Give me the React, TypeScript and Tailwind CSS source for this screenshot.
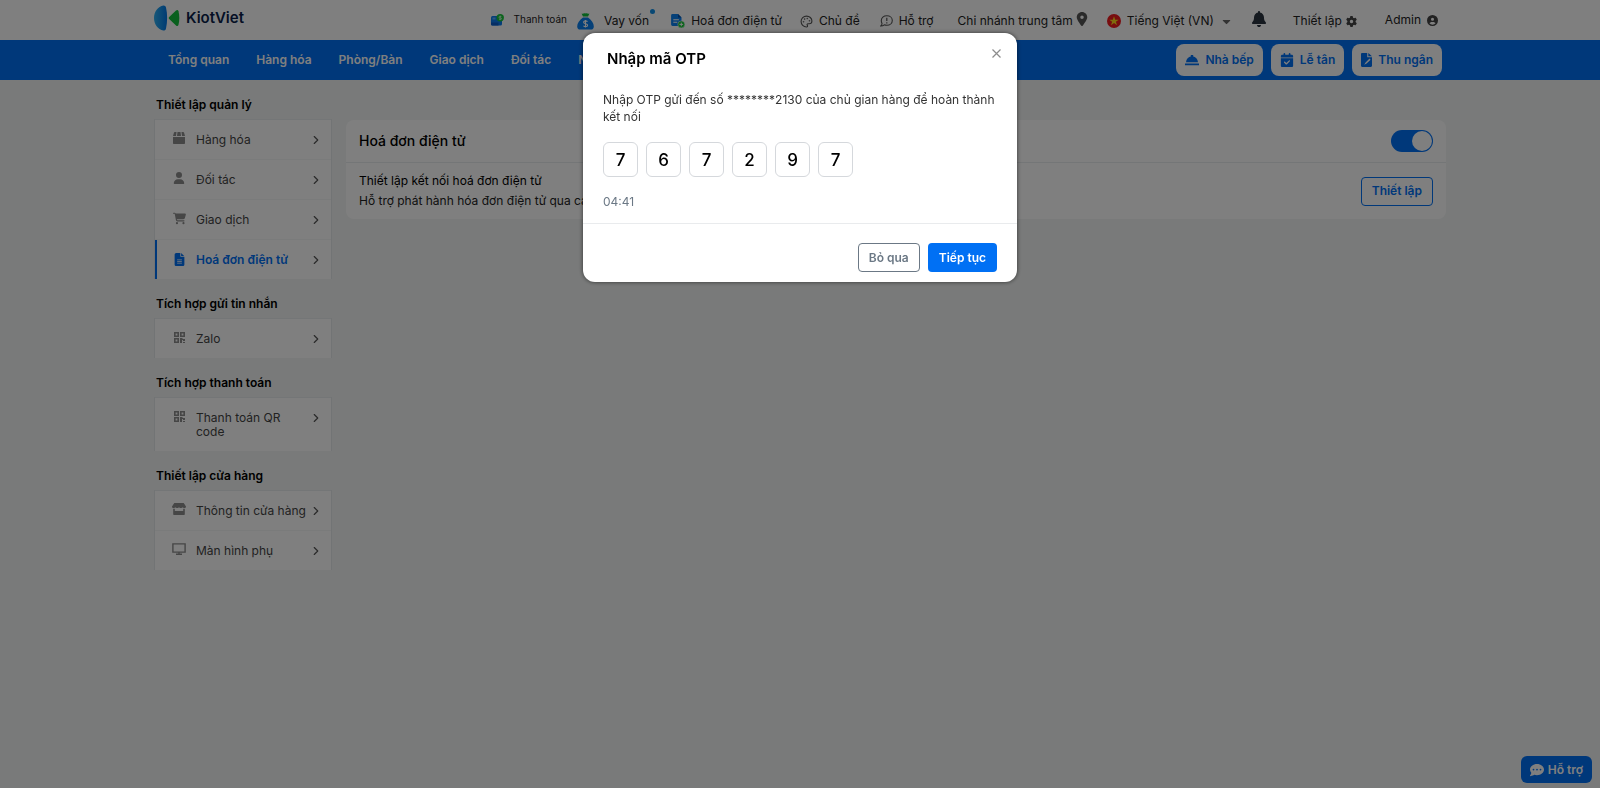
import { useState, type ReactNode } from "react";
import {
  FaBell,
  FaCalendarCheck,
  FaCartShopping,
  FaCircleUser,
  FaCommentDots,
  FaFileLines,
  FaGear,
  FaLocationDot,
  FaUser,
} from "react-icons/fa6";
import { FaCaretDown } from "react-icons/fa";
import { ChevronRight, Palette } from "lucide-react";

function Logo() {
  return (
    <svg width="26" height="26" viewBox="0 0 26 26" aria-hidden="true">
      <defs>
        <linearGradient id="logoBlue" x1="0" y1="0" x2="1" y2="0">
          <stop offset="0" stopColor="#2fb0f0" />
          <stop offset="1" stopColor="#0078e8" />
        </linearGradient>
      </defs>
      <path d="M9.400.4c1.600 0 2.300.8 2.600 2.200 1.500 6.500 1.500 14.300 0 20.800-.3 1.400-1 2.200-2.600 2.200C4 24.500 0 19.500 0 13S4 1.500 9.400.4Z" fill="url(#logoBlue)" />
      <path d="M15.200 12 22 5.600c1.100-1 2.100-.7 2.500.6 1.100 4.400 1.100 9.200 0 13.600-.4 1.300-1.400 1.600-2.500.6L15.200 14c-.7-.7-.7-1.300 0-2Z" fill="#12c03c" />
    </svg>
  );
}

function PaymentIcon() {
  return (
    <svg width="13" height="12" viewBox="0 0 13 12" aria-hidden="true">
      <rect x="0" y="2" width="11" height="9.500" rx="1.500" fill="#0a7cf0" />
      <path d="M0 8.500h7.500v3H1.500A1.500 1.500 0 0 1 0 10Z" fill="#0a5cc8" />
      <rect x="1.500" y="3.500" width="3" height="2" fill="#5cb0ff" />
      <circle cx="9.200" cy="3.800" r="3.700" fill="#19c83a" />
      <path d="M9.200 1.500v4.600M10.400 2.500H8.600a.7.7 0 0 0 0 1.400h1.200a.7.7 0 0 1 0 1.400H8" stroke="#d8ffe0" strokeWidth=".7" fill="none" />
    </svg>
  );
}

function LoanIcon() {
  return (
    <svg width="17" height="17" viewBox="0 0 17 17" aria-hidden="true">
      <path d="M4.500.5c1.500.6 2.400-.5 4 0 1.600-.5 2.500.6 4 0L11 3.600H6Z" fill="#12c03c" />
      <path d="M6 4.600h5c3.500 2.400 5.800 5.800 5.800 8.900 0 2-1 3.100-3 3.100H3.200c-2 0-3-1.100-3-3.100C.2 10.400 2.500 7 6 4.600Z" fill="#0a80f0" />
      <path d="M8.500 7v7.600M10.500 8.700c-.5-.6-1.200-.8-2-.8-1 0-1.900.5-1.900 1.400 0 2.100 4 .9 4 3 0 .9-.9 1.400-2 1.400-.9 0-1.700-.3-2.100-1" stroke="#fff" strokeWidth="1.100" fill="none" />
    </svg>
  );
}

function InvoiceIcon() {
  return (
    <svg width="14" height="14" viewBox="0 0 14 14" aria-hidden="true">
      <path d="M1.500 0H7l3.500 3.500V12H1.500A1.400 1.400 0 0 1 .1 10.600V1.400A1.400 1.400 0 0 1 1.500 0Z" fill="#0a80f0" />
      <path d="M7 0v3.500h3.500Z" fill="#054fa8" />
      <path d="M2.300 5.700h5.600M2.300 8.300h4" stroke="#fff" strokeWidth="1.100" />
      <circle cx="10.300" cy="10.400" r="3.500" fill="#19c83a" stroke="#fff" strokeWidth=".5" />
      <path d="M10.300 8.600v3.600M8.500 10.400h3.600" stroke="#fff" strokeWidth="1" />
    </svg>
  );
}

function HelpIcon() {
  return (
    <svg width="13" height="12" viewBox="0 0 13 12" fill="none" stroke="#555" strokeWidth="1.100" aria-hidden="true">
      <path d="M6.800.8c3.200 0 5.500 2 5.500 4.700s-2.300 4.800-5.500 4.800c-.9 0-1.700-.2-2.500-.5-1 .9-2.100 1.200-3.500 1.200.8-.8 1.200-1.600 1.200-2.600C1.500 7.600 1.300 6.600 1.300 5.500 1.300 2.800 3.600.8 6.800.8Z" />
      <path d="M6.800 2.800v3.300M6.800 7.200v1.200" strokeWidth="1.200" />
    </svg>
  );
}

function FlagIcon() {
  return (
    <svg width="14" height="14" viewBox="0 0 14 14" aria-hidden="true">
      <circle cx="7" cy="7" r="7" fill="#f01a1e" />
      <path d="m7 2.300 1.200 3.400h3.500L8.900 7.800 10 11.200 7 9.100l-3 2.100 1.100-3.400-2.800-2.100h3.500Z" fill="#ffd91a" />
    </svg>
  );
}

function BellDishIcon() {
  return (
    <svg width="14" height="11" viewBox="0 0 14 11" fill="currentColor" aria-hidden="true">
      <path d="M5.800 0h2.400v1.300h-.5C10.700 1.700 12.700 4 13 7.300H1c.3-3.300 2.300-5.600 5.300-6h-.5ZM0 8.600h14v1.700H0Z" />
    </svg>
  );
}

function FileCheckIcon() {
  return (
    <svg width="11" height="14" viewBox="0 0 11 14" fill="currentColor" aria-hidden="true">
      <path fillRule="evenodd" d="M1.200 0h5v4.200H11v8.600c0 .7-.5 1.200-1.200 1.200H1.200C.5 14 0 13.500 0 12.800V1.200C0 .5.500 0 1.200 0Zm7.300 5.600-3.900 3.900-1.400 2.200 2.400-1.200 4-3.800Z" />
      <path d="M7.300 0 11 3.200H7.300Z" />
    </svg>
  );
}

function BoxIcon() {
  return (
    <svg width="12" height="12" viewBox="0 0 12 12" fill="currentColor" aria-hidden="true">
      <path d="M1.800 0h1.700L3 4H0l1-3.400C1.100.2 1.400 0 1.800 0ZM4.500 0h3l.5 4H4ZM8.500 0h1.700c.4 0 .7.2.8.6L12 4H9ZM0 5h12v6c0 .6-.4 1-1 1H1c-.6 0-1-.4-1-1Z" />
    </svg>
  );
}

function QrIcon() {
  return (
    <svg width="11" height="11" viewBox="0 0 11 11" aria-hidden="true">
      <path d="M.8.8h3.400v3.400H.8ZM6.800.8h3.400v3.400H6.800ZM.8 6.800h3.400v3.400H.8Z" fill="none" stroke="currentColor" strokeWidth="1.600" />
      <path d="M6 6h2.500v1H11v2H9V8H8v3H6ZM9 10h2v1H9Z" fill="currentColor" />
    </svg>
  );
}

function ShopIcon() {
  return (
    <svg width="14" height="12" viewBox="0 0 14 12" fill="currentColor" aria-hidden="true">
      <path d="M2.300 0h9.400L14 3.400C14 4.600 13.200 5 12.400 5c-.9 0-1.300-.5-1.800-.5S9.700 5 8.800 5 7.500 4.500 7 4.500 6.100 5 5.200 5s-1.300-.5-1.800-.5S2.500 5 1.600 5 0 4.600 0 3.400Z" />
      <path fillRule="evenodd" d="M1.200 5.700h1.600V8h8.400V5.700h1.600V11c0 .6-.4 1-1 1H2.200c-.6 0-1-.4-1-1Z" />
    </svg>
  );
}

function ScreenIcon() {
  return (
    <svg width="14" height="12" viewBox="0 0 14 12" fill="none" stroke="currentColor" strokeWidth="1.400" aria-hidden="true">
      <path d="M.9.9h12.200v8.200H.9ZM7 9v2M4 11.200h6" />
    </svg>
  );
}

type MenuItem = { label: string; icon: ReactNode; active?: boolean };

const groups: { title: string; items: MenuItem[] }[] = [
  {
    title: "Thiết lập quản lý",
    items: [
      { label: "Hàng hóa", icon: <BoxIcon /> },
      { label: "Đối tác", icon: <FaUser size={12} /> },
      { label: "Giao dịch", icon: <FaCartShopping size={13} /> },
      { label: "Hoá đơn điện tử", icon: <FaFileLines size={13} />, active: true },
    ],
  },
  { title: "Tích hợp gửi tin nhắn", items: [{ label: "Zalo", icon: <QrIcon /> }] },
  { title: "Tích hợp thanh toán", items: [{ label: "Thanh toán QR code", icon: <QrIcon /> }] },
  {
    title: "Thiết lập cửa hàng",
    items: [
      { label: "Thông tin cửa hàng", icon: <ShopIcon /> },
      { label: "Màn hình phụ", icon: <ScreenIcon /> },
    ],
  },
];

function SideMenu() {
  return (
    <aside className="w-[178px] shrink-0">
      {groups.map((group) => (
        <section key={group.title}>
          <h2 className="flex h-[39px] items-center pt-2.5 pl-0.5 text-xs font-semibold text-black">{group.title}</h2>
          <ul className="border-x border-[#e4e8ea] bg-white">
            {group.items.map((item) => (
              <li key={item.label} className="border-t border-[#f5f6f7] first:border-[#e8ecee]">
                <a
                  href="#"
                  className={
                    item.active
                      ? "flex border-l-2 border-[#0070f4] pt-3 pr-2 pb-[11px] pl-[15px] font-semibold text-[#0070f4]"
                      : "flex pt-3 pr-2 pb-[11px] pl-[17px] text-[#444]"
                  }
                >
                  <span className={item.active ? "flex h-3.5 w-3.5 shrink-0 items-center justify-center" : "flex h-3 w-3.5 shrink-0 items-center justify-center text-[#8c8c8c]"}>
                    {item.icon}
                  </span>
                  <span className="ml-2.5 min-w-0 flex-1 py-px text-xs leading-[14px]">{item.label}</span>
                  <ChevronRight size={14} strokeWidth={2} className="mt-px shrink-0 text-[#555]" />
                </a>
              </li>
            ))}
          </ul>
        </section>
      ))}
    </aside>
  );
}

function Header() {
  return (
    <header className="h-10 bg-white">
      <div className="mx-auto flex h-full max-w-[1292px] items-center justify-between">
        <a href="#" className="flex items-center gap-1.5 pb-1 text-[15px] font-semibold text-[#0b1f4b]">
          <Logo />
          KiotViet
        </a>
        <nav className="flex items-center pt-0.5 pr-2 text-xs whitespace-nowrap text-[#222]">
          <a href="#" className="flex items-center gap-2.5 pb-0.5 text-[10px]"><PaymentIcon />Thanh toán</a>
          <a href="#" className="ml-2.5 flex items-center gap-2.5">
            <LoanIcon />
            <span className="relative">
              Vay vốn
              <span className="absolute -top-1 -right-1.5 size-[5px] rounded-full bg-[#1090e8]" />
            </span>
          </a>
          <a href="#" className="ml-5.5 flex items-center gap-1.5"><InvoiceIcon />Hoá đơn điện tử</a>
          <a href="#" className="ml-4.5 flex items-center gap-1.5"><Palette size={13} color="#555" />Chủ đề</a>
          <a href="#" className="ml-5 flex items-center gap-1.5"><HelpIcon />Hỗ trợ</a>
          <a href="#" className="ml-6 flex items-center gap-0.5">Chi nhánh trung tâm<FaLocationDot size={14} color="#555" className="mb-1" /></a>
          <button type="button" className="ml-4.5 flex items-center gap-1.5"><FlagIcon />Tiếng Việt (VN)<FaCaretDown size={13} color="#666" /></button>
          <button type="button" aria-label="Thông báo" className="ml-4.5 pb-1"><FaBell size={16} color="#2a3440" /></button>
          <a href="#" className="ml-[26px] flex items-center gap-1">Thiết lập<FaGear size={11} color="#444" /></a>
          <a href="#" className="ml-7 flex items-center gap-1.5 pb-0.5">Admin<FaCircleUser size={11} color="#444" /></a>
        </nav>
      </div>
    </header>
  );
}

const navItems = ["Tổng quan", "Hàng hóa", "Phòng/Bàn", "Giao dịch", "Đối tác", "Nhân viên"];
const shortcuts = [
  { label: "Nhà bếp", icon: <BellDishIcon /> },
  { label: "Lễ tân", icon: <FaCalendarCheck size={14} /> },
  { label: "Thu ngân", icon: <FileCheckIcon /> },
];

function MainNav() {
  return (
    <div className="h-10 bg-[#0070f4]">
      <div className="mx-auto flex h-full max-w-[1292px] items-center justify-between pr-1">
        <nav className="flex gap-[27px] pl-3.5 text-xs font-semibold text-white">
          {navItems.map((label) => (
            <a key={label} href="#">{label}</a>
          ))}
        </nav>
        <div className="flex gap-2">
          {shortcuts.map(({ label, icon }) => (
            <a key={label} href="#" className="flex h-8 items-center gap-1.5 rounded-lg bg-white px-[9px] text-xs font-semibold text-[#0070f4]">
              {icon}
              {label}
            </a>
          ))}
        </div>
      </div>
    </div>
  );
}

function InvoicePanel() {
  const [enabled, setEnabled] = useState(true);
  return (
    <main className="mt-10 min-w-0 flex-1 self-start rounded-lg bg-white">
      <div className="flex h-[43px] items-center justify-between border-b border-[#e8ecee] px-[13px]">
        <h1 className="text-sm font-medium text-black">Hoá đơn điện tử</h1>
        <label className="relative flex h-[22px] w-[42px] items-center rounded-full bg-[#0070f4] has-[input:not(:checked)]:bg-gray-400">
          <input
            type="checkbox"
            aria-label="Hoá đơn điện tử"
            checked={enabled}
            onChange={(e) => setEnabled(e.target.checked)}
            className="peer absolute inset-0 appearance-none"
          />
          <span className="ml-px size-5 rounded-full bg-white peer-checked:ml-[21px]" />
        </label>
      </div>
      <div className="flex items-center justify-between px-[13px] py-2">
        <div className="text-xs leading-5 text-[#222]">
          <p className="text-black">Thiết lập kết nối hoá đơn điện tử</p>
          <p>Hỗ trợ phát hành hóa đơn điện tử qua các nhà cung cấp</p>
        </div>
        <button type="button" className="h-[29px] rounded border border-[#0070f4] px-2.5 text-xs font-semibold text-[#0070f4]">
          Thiết lập
        </button>
      </div>
    </main>
  );
}

function OtpDialog() {
  const [digits, setDigits] = useState(["7", "6", "7", "2", "9", "7"]);
  return (
    <div className="fixed inset-0 flex items-start justify-center bg-black/50 pt-[33px]">
      <div role="dialog" aria-modal="true" aria-labelledby="otp-title" className="w-[434px] rounded-xl bg-white shadow-[0_0_4px_rgba(0,0,0,0.6)]">
        <div className="flex items-start justify-between pt-[15px] pr-4 pl-6">
          <h2 id="otp-title" className="text-[15px] leading-[22px] font-semibold text-black">Nhập mã OTP</h2>
          <button type="button" aria-label="Đóng" className="flex size-2.5 items-center justify-center text-[#8c8c8c]">
            <svg width="9" height="9" viewBox="0 0 9 9" stroke="currentColor" strokeWidth="1.200" aria-hidden="true">
              <path d="m.5.5 8 8M8.500.5l-8 8" />
            </svg>
          </button>
        </div>
        <div className="border-b border-[#e9ebed] px-5 pt-[21px] pb-[11px]">
          <p className="text-xs leading-[17px] text-[#333]">
            Nhập OTP gửi đến số ********2130 của chủ gian hàng để hoàn thành kết nối
          </p>
          <div className="mt-[17px] flex gap-2">
            {digits.map((digit, i) => (
              <input
                key={i}
                aria-label={`Số thứ ${i + 1}`}
                inputMode="numeric"
                maxLength={1}
                value={digit}
                onChange={(e) => setDigits(digits.map((d, j) => (j === i ? e.target.value : d)))}
                className="size-[35px] rounded-md border border-[#d5d8dc] text-center text-[17px] font-medium text-black"
              />
            ))}
          </div>
          <p className="mt-[15px] text-xs leading-5 text-[#6b7885]">04:41</p>
        </div>
        <div className="flex justify-end gap-2 px-5 pt-[19px] pb-2.5">
          <button type="button" className="h-[29px] rounded border border-[#6b7885] px-2.5 text-xs font-semibold text-[#6b7885]">Bỏ qua</button>
          <button type="button" className="h-[29px] rounded bg-[#0070f4] px-[11px] text-xs font-semibold text-white">Tiếp tục</button>
        </div>
      </div>
    </div>
  );
}

export default function App() {
  return (
    <div className="min-h-screen bg-[#f2f5f4] font-['Inter',sans-serif]">
      <Header />
      <MainNav />
      <div className="mx-auto flex max-w-[1292px] gap-3.5">
        <SideMenu />
        <InvoicePanel />
      </div>
      <button type="button" className="fixed right-2 bottom-[5px] flex h-[27px] items-center gap-1 rounded-md bg-[#0070f4] px-[9px] text-xs font-semibold text-white">
        <FaCommentDots size={14} />
        Hỗ trợ
      </button>
      <OtpDialog />
    </div>
  );
}
